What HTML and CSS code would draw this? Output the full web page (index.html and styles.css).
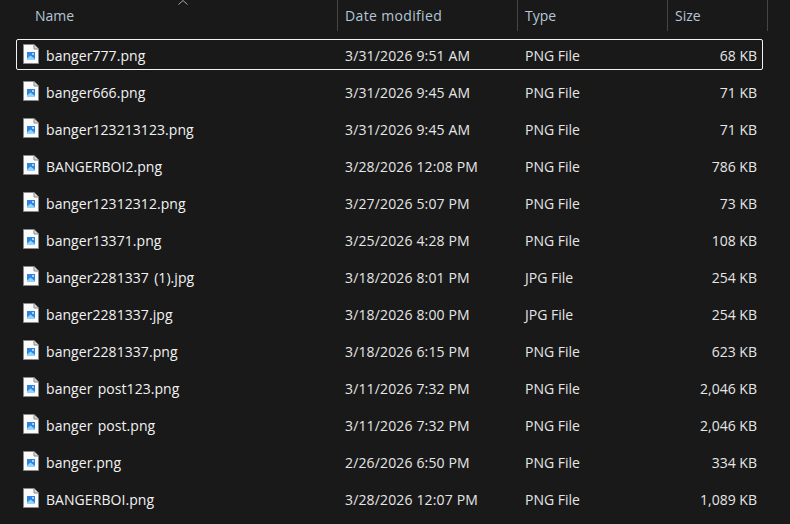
FILE: index.html
```html
<!DOCTYPE html>
<html lang="en">
<head>
<meta charset="utf-8">
<title>Files</title>
<link rel="stylesheet" href="styles.css">
</head>
<body>
<svg class="defs" width="0" height="0" aria-hidden="true">
  <symbol id="file" viewBox="0 0 16 20">
    <path d="M.5.5H11L15.5 5V19.5H.5Z" fill="#fbfbfb" stroke="#8a8a8a"/>
    <path d="M11 .5V5H15.5" fill="#d8d8d8" stroke="#8a8a8a"/>
    <rect x="4" y="8" width="8" height="8" fill="#2f84e0"/>
    <path d="M4 16V14.5L7.5 11.5 12 15V16Z" fill="#8fd4f8"/>
    <circle cx="10" cy="10" r="1" fill="#cbeafc"/>
  </symbol>
</svg>
<div class="header">
  <div class="sort">
    <svg width="10" height="5" viewBox="0 0 10 5"><path d="M.5 4.5 5 .5 9.5 4.5" fill="none" stroke="#a8a8a8"/></svg>
  </div>
  <div class="head head-name">Name</div>
  <div class="head head-date">Date modified</div>
  <div class="head">Type</div>
  <div class="head">Size</div>
  <div class="head head-end"></div>
</div>
<div class="list">
  <div class="row selected"><div class="name"><svg class="icon"><use href="#file"/></svg>banger777.png</div><div class="date">3/31/2026 9:51 AM</div><div>PNG File</div><div class="size">68 KB</div></div>
  <div class="row"><div class="name"><svg class="icon"><use href="#file"/></svg>banger666.png</div><div class="date">3/31/2026 9:45 AM</div><div>PNG File</div><div class="size">71 KB</div></div>
  <div class="row"><div class="name"><svg class="icon"><use href="#file"/></svg>banger123213123.png</div><div class="date">3/31/2026 9:45 AM</div><div>PNG File</div><div class="size">71 KB</div></div>
  <div class="row"><div class="name"><svg class="icon"><use href="#file"/></svg>BANGERBOI2.png</div><div class="date">3/28/2026 12:08 PM</div><div>PNG File</div><div class="size">786 KB</div></div>
  <div class="row"><div class="name"><svg class="icon"><use href="#file"/></svg>banger12312312.png</div><div class="date">3/27/2026 5:07 PM</div><div>PNG File</div><div class="size">73 KB</div></div>
  <div class="row"><div class="name"><svg class="icon"><use href="#file"/></svg>banger13371.png</div><div class="date">3/25/2026 4:28 PM</div><div>PNG File</div><div class="size">108 KB</div></div>
  <div class="row"><div class="name"><svg class="icon"><use href="#file"/></svg>banger2281337 (1).jpg</div><div class="date">3/18/2026 8:01 PM</div><div>JPG File</div><div class="size">254 KB</div></div>
  <div class="row"><div class="name"><svg class="icon"><use href="#file"/></svg>banger2281337.jpg</div><div class="date">3/18/2026 8:00 PM</div><div>JPG File</div><div class="size">254 KB</div></div>
  <div class="row"><div class="name"><svg class="icon"><use href="#file"/></svg>banger2281337.png</div><div class="date">3/18/2026 6:15 PM</div><div>PNG File</div><div class="size">623 KB</div></div>
  <div class="row"><div class="name"><svg class="icon"><use href="#file"/></svg>banger post123.png</div><div class="date">3/11/2026 7:32 PM</div><div>PNG File</div><div class="size">2,046 KB</div></div>
  <div class="row"><div class="name"><svg class="icon"><use href="#file"/></svg>banger post.png</div><div class="date">3/11/2026 7:32 PM</div><div>PNG File</div><div class="size">2,046 KB</div></div>
  <div class="row"><div class="name"><svg class="icon"><use href="#file"/></svg>banger.png</div><div class="date">2/26/2026 6:50 PM</div><div>PNG File</div><div class="size">334 KB</div></div>
  <div class="row"><div class="name"><svg class="icon"><use href="#file"/></svg>BANGERBOI.png</div><div class="date">3/28/2026 12:07 PM</div><div>PNG File</div><div class="size">1,089 KB</div></div>
</div>
</body>
</html>
```
FILE: styles.css
```css
html, body {
  margin: 0;
  height: 524px;
  overflow: hidden;
  background: #191919;
  font-family: "Open Sans", "Noto Sans", sans-serif;
  font-size: 14px;
}
.defs { position: absolute; }
.header {
  position: relative;
  display: grid;
  grid-template-columns: 338px 180px 150px 100px 22px;
  height: 31px;
  color: #b5c6d6;
}
.sort {
  position: absolute;
  left: 178px;
  top: 0;
  line-height: 0;
}
.head {
  padding-left: 7px;
  padding-top: 6px;
  border-right: 1px solid #454545;
  line-height: 20px;
}
.head-name { padding-left: 35px; }
.head-date { letter-spacing: .35px; }
.head-end { border-right: 0; }
.list {
  display: flex;
  flex-direction: column;
  gap: 6px;
  padding: 8px 27px 0 16px;
}
.row {
  display: grid;
  grid-template-columns: 320px 180px 150px 90px;
  align-items: center;
  height: 31px;
  box-sizing: border-box;
  padding-top: 2px;
  color: #e6e6e6;
  border: 1px solid transparent;
  border-radius: 2px;
}
.row > div { padding-left: 8px; }
.selected { border-color: #f2f2f2; }
.date { letter-spacing: .15px; }
.name {
  display: flex;
  align-items: center;
  gap: 7px;
  color: #f2f2f2;
  letter-spacing: .06px;
  white-space: pre;
  word-spacing: 1.5px;
  padding-left: 6px !important;
}
.icon {
  width: 16px;
  height: 20px;
  flex: none;
  margin-top: -3px;
}
.size {
  text-align: right;
  padding-left: 0 !important;
}
```
